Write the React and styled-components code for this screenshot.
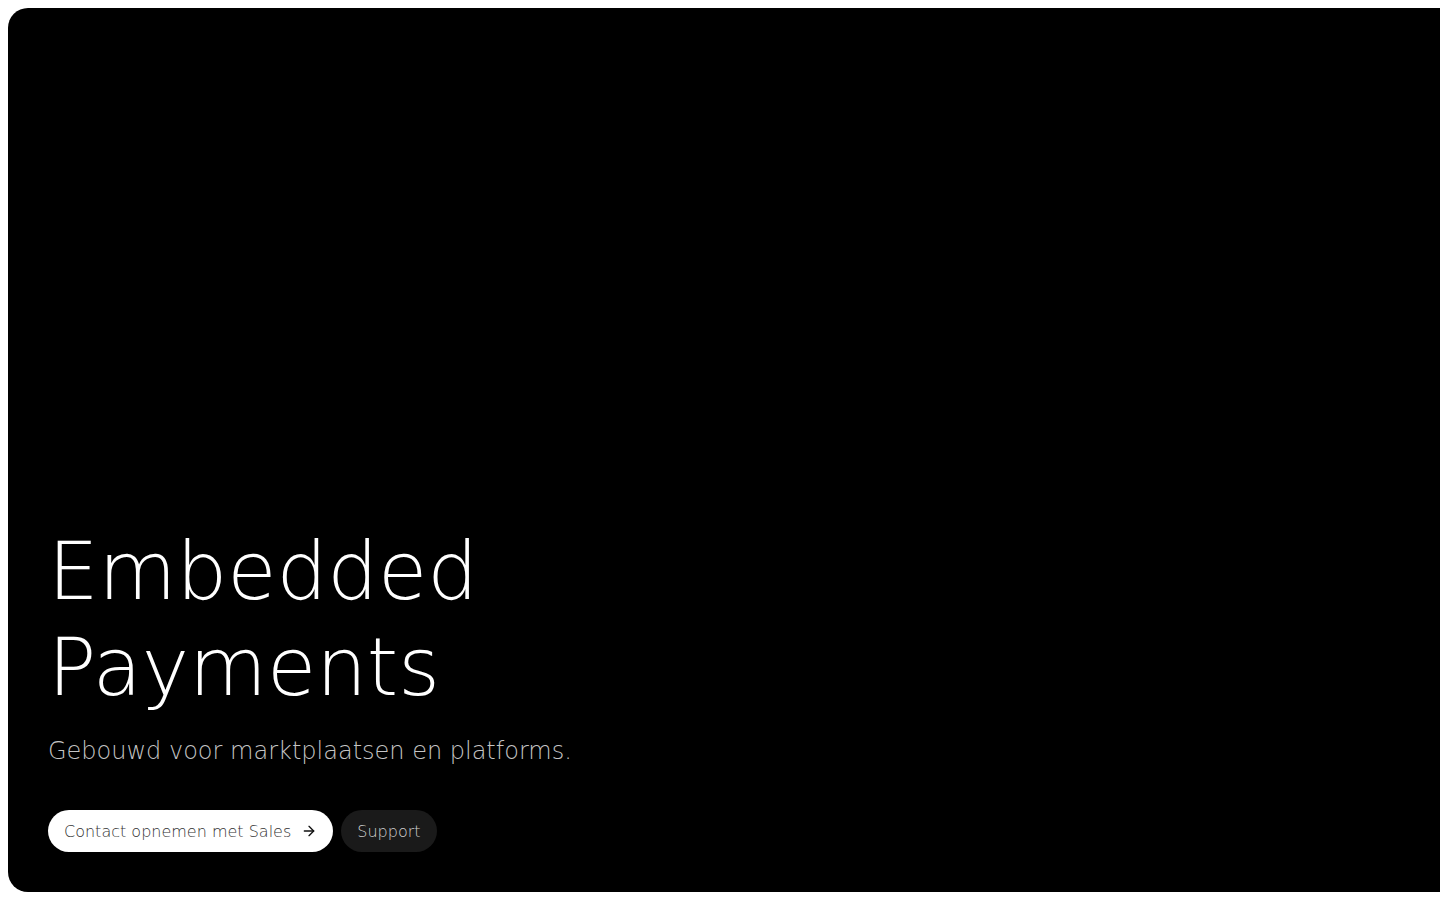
import styled, { createGlobalStyle } from "styled-components";
import { ArrowRight } from "lucide-react";

const GlobalStyle = createGlobalStyle`
  html, body {
    margin: 0;
    background: #ffffff;
    overflow: hidden;
  }
  body {
    padding: 8px;
    font-family: "DejaVu Sans", sans-serif;
  }
`;

const Hero = styled.section`
  box-sizing: border-box;
  width: 1460px;
  height: 884px;
  background: #000000;
  border-radius: 20px;
  display: flex;
  flex-direction: column;
  justify-content: flex-end;
  padding: 0 40px 40px 40px;
  color: #ffffff;
`;

const Title = styled.h1`
  margin: 0;
  font-family: "DejaVu Sans", sans-serif;
  font-weight: 200;
  font-size: 80px;
  line-height: 96px;
  letter-spacing: 0;
  color: #ffffff;
`;

const Subtitle = styled.p`
  margin: 19px 0 43px 0;
  font-family: "DejaVu Sans", sans-serif;
  font-weight: 200;
  font-size: 24px;
  line-height: 32px;
  color: #c4c4c4;
`;

const Actions = styled.div`
  display: flex;
  gap: 8px;
  align-items: center;
`;

const PillButton = styled.a`
  box-sizing: border-box;
  display: inline-flex;
  align-items: center;
  gap: 10px;
  height: 42px;
  padding: 0 16px;
  border-radius: 999px;
  font-family: "DejaVu Sans", sans-serif;
  font-weight: 200;
  font-size: 16px;
  text-decoration: none;
  cursor: pointer;
  background: ${(p) => (p.$primary ? "#ffffff" : "#1a1a1a")};
  color: ${(p) => (p.$primary ? "#333333" : "#d0d0d0")};
`;

export default function App() {
  return (
    <>
      <GlobalStyle />
      <Hero>
        <Title>
          Embedded
          <br />
          Payments
        </Title>
        <Subtitle>Gebouwd voor marktplaatsen en platforms.</Subtitle>
        <Actions>
          <PillButton $primary>
            Contact opnemen met Sales
            <ArrowRight size={16} strokeWidth={2} color="#111" />
          </PillButton>
          <PillButton>Support</PillButton>
        </Actions>
      </Hero>
    </>
  );
}
